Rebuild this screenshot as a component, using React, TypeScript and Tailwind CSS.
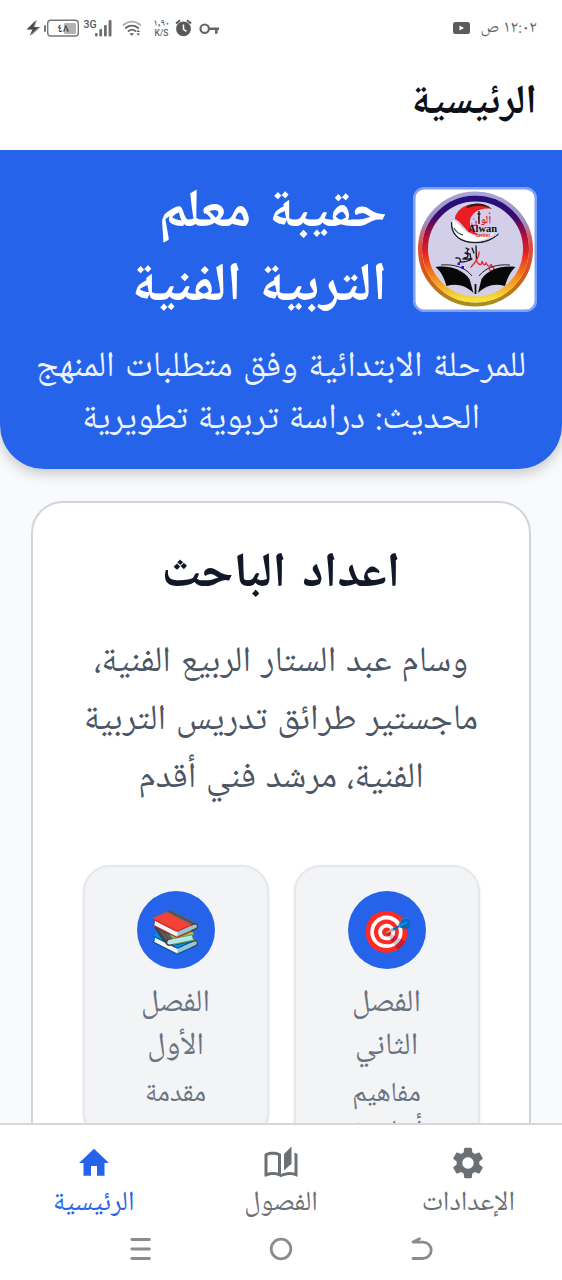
import type { ReactNode } from "react";
import { MdSettings } from "react-icons/md";

function StatusBar() {
  return (
    <div className="flex h-14 shrink-0 items-center justify-between pr-[25px] pl-[26px] text-[#666]" dir="ltr">
      <svg className="h-[30px] w-[200px]" viewBox="26 13 200 30" fill="none">
        <path d="M37 20l-9 9.500h6L31 36l10-9h-6z" fill="#aaa" />
        <path d="M36 20l-9.500 9.500h6L29.500 36l9.500-9h-5.500z" fill="#4b4b4b" />
        <rect x="44" y="25" width="2" height="7" rx="1" fill="#777" />
        <rect x="47.700" y="20.200" width="30.600" height="15.800" rx="3" stroke="#777" strokeWidth="1.400" />
        <rect x="64" y="23" width="12" height="11" rx="1.500" fill="#b3b3b3" />
        <text x="63" y="32" fontSize="12" fontWeight="600" textAnchor="middle" fill="#333" className="font-['Noto_Naskh_Arabic',sans-serif]">٤٨</text>
        <text x="83.500" y="28" fontSize="10.500" fontWeight="500" fill="#555" className="font-['Roboto',sans-serif]">3G</text>
        <g fill="#6e6e6e">
          <rect x="95" y="33" width="2.600" height="3.500" rx="1" />
          <rect x="99.300" y="29" width="2.800" height="7.500" rx="1" />
          <rect x="104" y="25" width="2.800" height="11.500" rx="1" />
          <rect x="108.600" y="20" width="2.900" height="16.500" rx="1" />
        </g>
        <g strokeWidth="1.800" strokeLinecap="round">
          <path d="M123.500 25c5-4.400 12-4.400 16.800 0" stroke="#b0b0b0" />
          <path d="M125.800 28c3.600-3 8.600-3 12.400 0" stroke="#666" />
          <path d="M128.500 31c2.200-1.700 5-1.700 7 0" stroke="#666" />
        </g>
        <path d="M129.500 33.300h4.500l-2.300 2.500zM136.500 32h3.500l-1.800-2zM136.500 33.500h3.500l-1.800 2z" fill="#555" />
        <text x="161.500" y="25.500" fontSize="10" fontWeight="500" textAnchor="middle" fill="#555" className="font-['Noto_Naskh_Arabic',sans-serif]">١,٩٠</text>
        <text x="161.500" y="36" fontSize="8.500" fontWeight="500" textAnchor="middle" fill="#666" className="font-['Roboto',sans-serif]">K/S</text>
        <circle cx="183.500" cy="28.800" r="7.400" fill="#595959" />
        <path d="M183.500 24.500v4.800l3 2" stroke="#fff" strokeWidth="1.500" />
        <path d="M176 23.500l4-3.300M191 23.500l-4-3.300" stroke="#595959" strokeWidth="2" />
        <circle cx="204.700" cy="28.700" r="4.200" stroke="#666" strokeWidth="2.200" />
        <path d="M209 28.700h10M216.300 28.700v5" stroke="#666" strokeWidth="2.600" />
      </svg>
      <div className="flex items-center gap-[11px]">
        <svg className="h-3 w-[17px]" viewBox="0 0 17 12">
          <rect width="17" height="12" rx="2.500" fill="#5c5c5c" />
          <path d="M6.500 3.500v5L11 6z" fill="#fff" />
        </svg>
        <span className="text-[17px] leading-none" dir="rtl">١٢:٠٢ ص</span>
      </div>
    </div>
  );
}

function Logo() {
  return (
    <svg className="mt-[10px] h-[125px] w-[124px] shrink-0" viewBox="8 7 124 125">
      <defs>
        <linearGradient id="ring" x1="0" y1="0" x2="0" y2="1">
          <stop offset="0" stopColor="#23107c" />
          <stop offset=".18" stopColor="#3c0a70" />
          <stop offset=".36" stopColor="#a80f3c" />
          <stop offset=".55" stopColor="#e9261d" />
          <stop offset=".78" stopColor="#f58a1c" />
          <stop offset="1" stopColor="#f6e13a" />
        </linearGradient>
        <linearGradient id="rim" x1="0" y1="0" x2="0" y2="1">
          <stop offset="0" stopColor="#a9a3d6" />
          <stop offset=".25" stopColor="#9d8fc4" />
          <stop offset=".45" stopColor="#e0503f" />
          <stop offset=".7" stopColor="#d8511c" />
          <stop offset="1" stopColor="#a8901c" />
        </linearGradient>
      </defs>
      <rect x="9.200" y="8.200" width="121.600" height="122.600" rx="10" fill="#fff" stroke="#7da2f5" strokeWidth="2.600" />
      <circle cx="70.500" cy="69" r="55.500" fill="none" stroke="url(#rim)" strokeWidth="4" />
      <circle cx="70.500" cy="69" r="50.500" fill="#d3cfe8" stroke="url(#ring)" strokeWidth="6" />
      <path d="M48 40c5 2 9 9 15 13 8 4 17 4 27-1-8 8-18 11-27 9-11-2-17-11-15-21z" fill="#fff" />
      <path d="M87 29C78 21 59 22 52 33c-1.500 2-2 4-2 6 5 2 9 9 14 13 3 2 7 3 10 2.500-6-2.500-10-7-9-13.500 1-8 10-14 22-12z" fill="#ec1c24" />
      <path d="M46.500 42c-1 11 6 19 19 20.500 11 1.200 20-1 28-8.500-8 7-18 9.500-29 8-12-2-18-9-18-20z" fill="#111" stroke="#111" strokeWidth=".8" />
      <path d="M61 27c7-5 18-5 26 2-9-4-16-4-24-1" fill="#222" />
      <path d="M49 48c2 4 5 6 9 7" stroke="#3a6b47" strokeWidth="1.300" fill="none" />
      <text x="76" y="43" fontSize="11" fontWeight="700" textAnchor="middle" fill="#e0232e" direction="rtl" className="font-['Noto_Naskh_Arabic',sans-serif]">ألوان</text>
      <path d="M74 31v13M72.500 34h3" stroke="#161616" strokeWidth="1.300" />
      <text x="77.500" y="52" fontSize="10.500" fontWeight="700" textAnchor="middle" fill="#111" className="font-['Liberation_Serif',serif]">Alwan</text>
      <text x="78" y="56.500" fontSize="5" fontWeight="700" textAnchor="middle" fill="#e0232e" className="font-['Liberation_Sans',sans-serif]">center</text>
      <g fill="none" strokeLinecap="round">
        <path d="M71 66l.5 15M67 68l2 5M64 69c-3 2-2 5 1 5l1 5M60 73c4 1 4 5-1 5M65 79h-7M51 78c4-1 5 2 4 4 5 0 9-1 12-3M61 68l1.500 1" stroke="#161616" strokeWidth="1.300" />
        <path d="M74 72c0 6-3 10-8 15M72 82c3 4 5 3 5-1 1 4 3 5 4 2 2 4 5 4 5 1 1 4 4 4 3 6-2 2-5 1-5-2" stroke="#df2c35" strokeWidth="1.400" />
      </g>
      <path d="M52.500 82.500h2.500V85h-2.500zM56.500 86H59v3h-2.500z" fill="#1b17e8" />
      <path d="M30.500 87c13-2 27 2 34 12l4 14c-8-8-17-10-27-7-2-7-5-14-11-19zM110.500 87c-13-2-27 2-34 12l-3.500 14c8-8 17-10 27-7 2-7 5-14 10.500-19z" fill="#080808" />
      <path d="M36 85c13-1 24 2 31 11M105 85c-13-1-24 2-31 11" fill="none" stroke="#222" strokeWidth="1" />
      <path d="M70.500 104v10" stroke="#111" strokeWidth="1.800" />
    </svg>
  );
}

function Hero() {
  return (
    <section className="h-[319px] shrink-0 rounded-b-[44px] bg-[#2563eb] pt-[27px] text-white shadow-[0_4px_14px_rgba(0,0,0,0.22)]">
      <div className="flex items-start gap-[26px] pr-[25px]">
        <Logo />
        <h1 className="text-[54px] leading-[74px] font-bold whitespace-nowrap [word-spacing:6px]">
          حقيبة معلم
          <br />
          التربية الفنية
        </h1>
      </div>
      <p className="mt-[18px] text-center text-[35.8px] leading-[51.5px] whitespace-nowrap text-[#eef3fe] [word-spacing:2.5px]">
        للمرحلة الابتدائية وفق متطلبات المنهج
        <br />
        <span className="text-[35.5px] [word-spacing:2px]">الحديث: دراسة تربوية تطويرية</span>
      </p>
    </section>
  );
}

function ChapterCard({ emoji, title, note }: { emoji: string; title: ReactNode; note: ReactNode }) {
  return (
    <article className="flex w-[186px] flex-col items-center rounded-[27px] border-2 border-[#e5e7eb] bg-[#f2f4f6] pt-6 pb-6 text-center text-[#6b7280] shadow-[0_1px_3px_rgba(0,0,0,0.1)]">
      <div className="flex size-[78px] items-center justify-center rounded-full bg-[#2563eb] pt-1 text-[41px] leading-none">
        <span className="font-['Noto_Color_Emoji',sans-serif]">{emoji}</span>
      </div>
      <h3 className="mt-[14px] text-[31.2px] leading-[43px]">{title}</h3>
      <p className="mt-[7px] text-[27.5px] leading-[38px]">{note}</p>
    </article>
  );
}

function BookIcon() {
  return (
    <svg className="size-9" viewBox="0 0 24 24" fill="currentColor">
      <path fillRule="evenodd" d="M19 1l-5 5v11l5-4.500V1zM1 6v14.650c0 .25.25.5.5.5.1 0 .15-.05.25-.05C3.100 20.450 5.050 20 6.500 20c1.950 0 4.050.4 5.500 1.500 1.350-.85 3.800-1.500 5.500-1.500 1.650 0 3.350.3 4.750 1.050.1.050.15.050.25.050.25 0 .5-.25.5-.5V6c-.6-.45-1.250-.75-2-1v13.500c-1.100-.35-2.300-.5-3.500-.5-1.700 0-4.150.65-5.500 1.500V6c-1.450-1.100-3.550-1.500-5.500-1.500S2.450 4.900 1 6zm9 12.410c-1.250-.32-2.500-.41-3.500-.41-1.060 0-2.320.19-3.500.5V7.130c.91-.4 2.140-.63 3.500-.63s2.600.23 3.500.63v11.280z" />
    </svg>
  );
}

function HomeIcon() {
  return (
    <svg className="size-9" viewBox="0 0 24 24" fill="currentColor">
      <path d="M10 20.500v-6.500h4v6.500h5v-8.500h3L12 2.500 2 12h3v8.500z" />
    </svg>
  );
}

function NavItem({ icon, label, active = false }: { icon: ReactNode; label: string; active?: boolean }) {
  return (
    <div className={active ? "flex flex-1 flex-col items-center text-[#2563eb]" : "flex flex-1 flex-col items-center text-[#6b7075]"}>
      <div className="flex h-10 items-center justify-center">{icon}</div>
      <span className="text-[27.5px] leading-[42px]">{label}</span>
    </div>
  );
}

function BottomBar() {
  return (
    <footer className="flex h-[157px] shrink-0 flex-col border-t-2 border-[#d5d7da] bg-white">
      <nav className="flex h-[102px] pt-[18px]">
        <NavItem icon={<MdSettings size={38} />} label="الإعدادات" />
        <NavItem icon={<BookIcon />} label="الفصول" />
        <NavItem icon={<HomeIcon />} label="الرئيسية" active />
      </nav>
      <svg className="mt-[7px] h-[30px] w-full shrink-0" viewBox="0 1234 562 30" fill="none" stroke="#8c8c8c" strokeWidth="2.800" strokeLinecap="round">
        <path d="M131.800 1239.500h17.600M131.800 1249h17.600M131.800 1258.500h17.600" />
        <circle cx="281" cy="1249" r="9.800" />
        <path d="M413 1258.500h10a8.200 8.200 0 0 0 0-16.400h-10l6.500-3.300" strokeLinejoin="round" />
      </svg>
    </footer>
  );
}

export default function App() {
  return (
    <div dir="rtl" className="flex h-[1280px] w-[562px] flex-col overflow-hidden bg-white font-['Noto_Naskh_Arabic','Noto_Sans',sans-serif]">
      <StatusBar />
      <header className="flex h-[94px] shrink-0 items-center pt-0.5 pr-[25px]">
        <h2 className="text-[41px] leading-[60px] font-bold text-[#0d1117]">الرئيسية</h2>
      </header>
      <main className="flex min-h-0 flex-1 flex-col overflow-hidden bg-[#f8fafc]">
        <Hero />
        <section className="mt-8 mr-[31px] ml-[31px] h-[700px] shrink-0 rounded-t-[32px] border-2 border-[#d1d5db] bg-white pt-10 text-center">
          <h2 className="text-[49px] leading-[66px] font-bold text-[#111827] [word-spacing:5px]">اعداد الباحث</h2>
          <p className="mt-[26px] text-[35.7px] leading-[58px] whitespace-nowrap text-[#4b5563] [word-spacing:2px]">
            وسام عبد الستار الربيع الفنية،
            <br />
            ماجستير طرائق تدريس التربية
            <br />
            الفنية، مرشد فني أقدم
          </p>
          <div className="mt-14 flex items-start justify-center gap-[25px]">
            <ChapterCard emoji="🎯" title={<>الفصل<br />الثاني</>} note={<>مفاهيم<br />أساسية</>} />
            <ChapterCard emoji="📚" title={<>الفصل<br />الأول</>} note="مقدمة" />
          </div>
        </section>
      </main>
      <BottomBar />
    </div>
  );
}
